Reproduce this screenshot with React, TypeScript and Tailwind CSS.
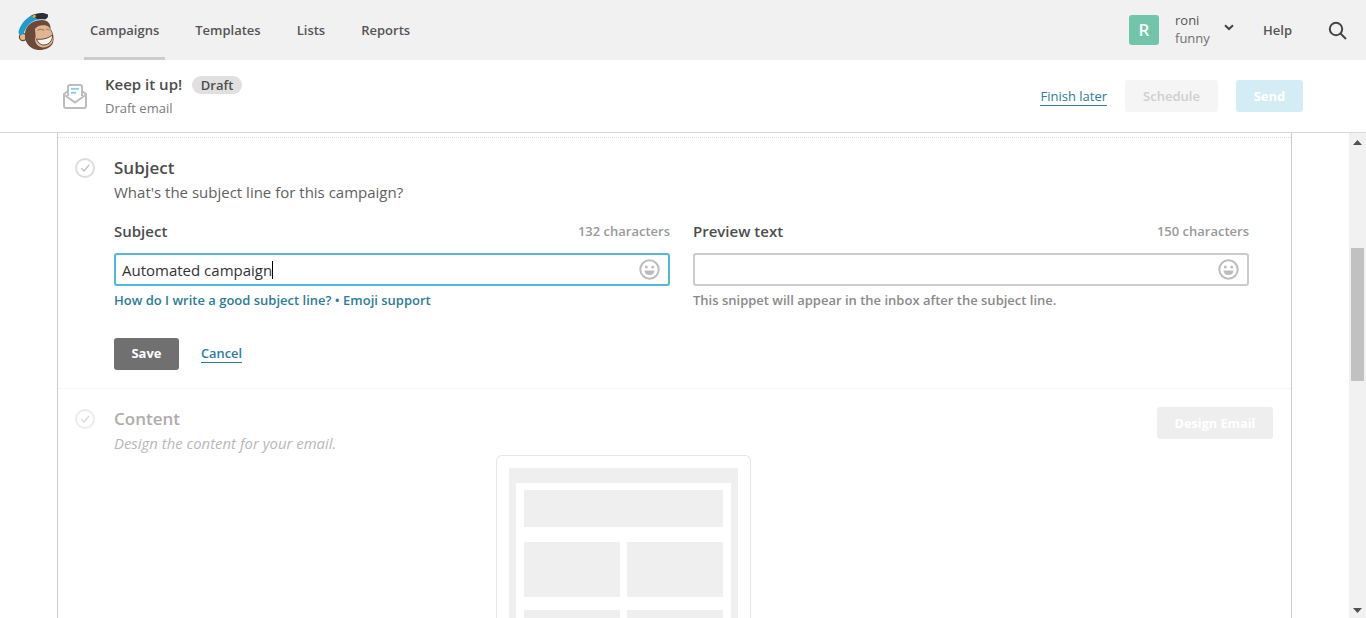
import React from "react";

function Logo() {
  return (
    <svg width="38" height="38" viewBox="0 0 38 38" className="block overflow-visible">
      <circle cx="6" cy="26" r="3.6" fill="#e3b993" stroke="#6b4a3a" strokeWidth="1.2" />
      <path d="M8 22 C9 13 17 9 25 9 C31 9 34 13 33.5 18 C36 21 37.5 27 36 32 C34 37 27 39.5 21 39 C14 38.5 9 33 8 27Z" fill="#6b4a3a" />
      <path d="M18 18 C20 14 29 13 32 16 C33.5 19 35.5 22 36 26 C37 31 33 36 27 36.5 C22 37 18 33 18 28 C19.5 25 18 22 18 18Z" fill="#dfb592" />
      <path d="M19.5 28 C25 29 31 27.5 35.5 24 C36 29 32 34 27 34 C23 34 20.5 31 19.5 28Z" fill="#f7f3ea" stroke="#4f3528" strokeWidth="0.9" />
      <path d="M20.5 19.5 Q24 17 27 19.5" fill="none" stroke="#a67a58" strokeWidth="1.2" />
      <path d="M29 18.5 Q31 17.5 32.5 19" fill="none" stroke="#a67a58" strokeWidth="1" />
      <path d="M1.5 21 C2.5 16 6 9.5 14 4.5 L21 8.5 C14 10 9 15 6.5 23 C4.5 24.5 1.5 24 1.5 21Z" fill="#1e9ccd" />
      <path d="M14 4.5 C20 1.5 27 1 31 3.5 C31.5 6 30 8 28 8.5 C26 8 23 8 21 8.5Z" fill="#2b3037" />
      <path d="M15.5 4.5 L18.5 3.5 L18.9 6 L16 7Z" fill="#dcb23c" />
    </svg>
  );
}

function EnvelopeIcon() {
  return (
    <svg width="26" height="26" viewBox="0 0 26 26" fill="none" className="block">
      <path d="M6 12 V3 Q6 1 8 1 H18 Q20 1 20 3 V12" stroke="#bdbdbd" strokeWidth="2" />
      <path d="M6 7 L2 10 V22 Q2 24 4 24 H22 Q24 24 24 22 V10 L20 7" stroke="#bdbdbd" strokeWidth="2" strokeLinejoin="round" />
      <path d="M2.5 11 L13 18.5 L23.5 11" stroke="#bdbdbd" strokeWidth="2" />
      <path d="M9 4.8 H17" stroke="#87cfe9" strokeWidth="1.8" />
      <path d="M9 8.8 H14" stroke="#87cfe9" strokeWidth="1.8" />
    </svg>
  );
}

function CheckCircle({ faded }: { faded?: boolean }) {
  const c = faded ? "#ececec" : "#dcdcdc";
  const k = faded ? "#d8d8d8" : "#bfbfbf";
  return (
    <svg width="20" height="20" viewBox="0 0 20 20" fill="none" className="block">
      <circle cx="10" cy="10" r="9" stroke={c} strokeWidth="2" />
      <path d="M6.2 10.2 L9 13 L14 7" stroke={k} strokeWidth="1.2" />
    </svg>
  );
}

function Smile() {
  return (
    <svg width="21" height="21" viewBox="0 0 21 21" fill="none" className="block">
      <circle cx="10.5" cy="10.5" r="9.2" stroke="#bdbdbd" strokeWidth="2" />
      <circle cx="7.3" cy="8" r="1.5" fill="#bdbdbd" />
      <circle cx="13.7" cy="8" r="1.5" fill="#bdbdbd" />
      <path d="M5.5 11.5 H15.5 Q15 16 10.5 16 Q6 16 5.5 11.5Z" fill="#bdbdbd" />
    </svg>
  );
}

function Field({
  label,
  count,
  value,
  focused,
  children,
}: {
  label: string;
  count: string;
  value?: string;
  focused?: boolean;
  children: React.ReactNode;
}) {
  return (
    <div className="w-[556px]">
      <div className="flex items-center justify-between h-[20px] pt-[1px]">
        <span className="text-[15px] font-semibold text-[#4d4d4d]">{label}</span>
        <span className="text-[13px] font-semibold text-[#999999]">{count}</span>
      </div>
      <div
        className={
          focused
            ? "mt-[12px] h-[33px] border-2 border-[#52b8d3] rounded-[3px] flex items-center justify-between pl-[6px] pr-[8px]"
            : "mt-[12px] h-[33px] border-2 border-[#cccccc] rounded-[3px] flex items-center justify-between pl-[6px] pr-[8px]"
        }
      >
        <span className="flex items-center pt-[1px] text-[15px] text-[#333333]">
          {value}
          {focused && <span className="inline-block w-px h-[18px] bg-black" />}
        </span>
        <Smile />
      </div>
      <div className="mt-[5px] h-[20px] text-[13px] font-semibold flex items-center">{children}</div>
    </div>
  );
}

export default function App() {
  return (
    <div className="h-[618px] w-[1366px] overflow-hidden flex flex-col bg-white font-['Open_Sans',sans-serif] text-[#4d4d4d]">
      <header className="h-[60px] shrink-0 bg-[#f1f1f1] flex items-center">
        <div className="ml-[17px] w-[38px]">
          <Logo />
        </div>
        <nav className="ml-[29px] flex h-full gap-[24px] text-[13px] font-semibold text-[#555555]">
          <a className="px-[6px] h-full flex items-center border-b-[3px] border-[#cccccc] pt-[4px]">Campaigns</a>
          <a className="px-[6px] h-full flex items-center pt-[1px]">Templates</a>
          <a className="px-[6px] h-full flex items-center pt-[1px]">Lists</a>
          <a className="px-[6px] h-full flex items-center pt-[1px]">Reports</a>
        </nav>
        <div className="ml-auto flex items-center h-full">
          <div className="w-[30px] h-[30px] rounded-[3px] bg-[#72c4aa] text-white font-semibold text-[17px] flex items-center justify-center">
            R
          </div>
          <div className="ml-[16px] w-[47px] -mt-[2px] text-[13px] leading-[18px] text-[#555555]">
            <div>roni</div>
            <div className="text-[#6f6f6f]">funny</div>
          </div>
          <svg width="10" height="7" viewBox="0 0 10 7" fill="none" className="ml-[2px] mb-[6px]">
            <path d="M1 1.2 L5 5 L9 1.2" stroke="#444444" strokeWidth="2" />
          </svg>
          <a className="ml-[29px] pt-[1px] text-[13px] font-semibold text-[#555555]">Help</a>
          <svg width="19" height="19" viewBox="0 0 19 19" fill="none" className="ml-[36px] mr-[19px]">
            <circle cx="8" cy="8" r="6.2" stroke="#444444" strokeWidth="2" />
            <path d="M12.5 12.5 L18 18" stroke="#444444" strokeWidth="2" />
          </svg>
        </div>
      </header>

      <div className="h-[73px] shrink-0 border-b border-[#d8d8d8] flex items-center">
        <div className="ml-[62px] mt-[2px]">
          <EnvelopeIcon />
        </div>
        <div className="ml-[17px] -mt-[2px]">
          <div className="flex items-center h-[22px]">
            <span className="text-[15px] font-semibold text-[#4d4d4d]">Keep it up!</span>
            <span className="ml-[10px] mt-[1px] h-[18px] w-[50px] rounded-full bg-[#e0e0e0] text-[13px] font-semibold flex items-center justify-center">
              <span className="pt-[2px]">Draft</span>
            </span>
          </div>
          <div className="mt-[3px] text-[13px] leading-[18px] text-[#7a7a7a]">Draft email</div>
        </div>
        <div className="ml-auto mr-[63px] flex items-center">
          <a className="text-[13px] mt-[1px] leading-[17px] text-[#2c7d97] border-b border-[#2c7d97]">Finish later</a>
          <div className="ml-[18px] w-[93px] h-[32px] pt-[1px] rounded-[3px] bg-[#f5f5f5] text-[#cfcfcf] text-[13px] font-semibold flex items-center justify-center">
            Schedule
          </div>
          <div className="ml-[18px] w-[67px] h-[32px] pt-[1px] rounded-[3px] bg-[#d4edf4] text-white text-[13px] font-bold flex items-center justify-center">
            Send
          </div>
        </div>
      </div>

      <div className="flex-1 min-h-0 flex">
        <main className="flex-1 min-w-0 overflow-hidden pl-[57px] pr-[57px]">
          <div className="w-[1235px] h-full border-x border-[#cccccc] pt-[4px]">
            <section className="border-t border-dotted border-[#dddddd] h-[252px] border-b border-b-[#eeeeee]">
              <div className="flex pt-[20px] pl-[17px]">
                <div className="w-[39px] shrink-0">
                  <CheckCircle />
                </div>
                <div>
                  <h2 className="text-[17px] leading-[20px] font-semibold text-[#4d4d4d]">Subject</h2>
                  <p className="mt-[4px] text-[15px] leading-[20px] text-[#5f5f5f]">
                    What's the subject line for this campaign?
                  </p>
                  <div className="mt-[19px] flex gap-[23px]">
                    <Field label="Subject" count="132 characters" value="Automated campaign" focused>
                      <span className="text-[#2c7d97]">How do I write a good subject line? • Emoji support</span>
                    </Field>
                    <Field label="Preview text" count="150 characters">
                      <span className="text-[#8a8a8a]">This snippet will appear in the inbox after the subject line.</span>
                    </Field>
                  </div>
                  <div className="mt-[27px] flex items-center">
                    <div className="w-[65px] h-[32px] rounded-[3px] bg-[#707070] text-white text-[13px] font-bold flex items-center justify-center">
                      Save
                    </div>
                    <a className="ml-[22px] mb-[1px] text-[12.8px] font-semibold leading-[17px] text-[#2c7d97] border-b border-[#2c7d97]">
                      Cancel
                    </a>
                  </div>
                </div>
              </div>
            </section>
            <section>
              <div className="flex pt-[20px] pl-[17px]">
                <div className="w-[39px] shrink-0">
                  <CheckCircle faded />
                </div>
                <div className="flex-1 min-w-0">
                  <div className="flex justify-between">
                    <div>
                      <h2 className="text-[17px] leading-[20px] font-semibold text-[#adadad]">Content</h2>
                      <p className="mt-[4px] text-[14.9px] leading-[20px] italic text-[#b8b8b8]">
                        Design the content for your email.
                      </p>
                    </div>
                    <div className="-mt-[2px] mr-[18px] w-[116px] h-[32px] pt-[1px] rounded-[3px] bg-[#eeeeee] text-white text-[12.7px] font-bold flex items-center justify-center">
                      Design Email
                    </div>
                  </div>
                  <div className="ml-[382px] mt-[2px] w-[255px] h-[200px] border border-b-0 border-[#e6e6e6] rounded-t-[6px] pt-[12px] px-[12px]">
                    <div className="bg-[#efefef] h-[200px] pt-[15px] px-[7px]">
                      <div className="bg-white h-[200px] pt-[7px] px-[8px]">
                        <div className="h-[37px] bg-[#efefef]" />
                        <div className="mt-[15px] grid grid-cols-2 gap-[7px]">
                          <div className="h-[55px] bg-[#efefef]" />
                          <div className="h-[55px] bg-[#efefef]" />
                          <div className="mt-[6px] h-[40px] bg-[#efefef]" />
                          <div className="mt-[6px] h-[40px] bg-[#efefef]" />
                        </div>
                      </div>
                    </div>
                  </div>
                </div>
              </div>
            </section>
          </div>
        </main>
        <aside className="relative w-[17px] shrink-0 bg-[#f1f1f1] flex justify-center">
          <div className="mt-[115px] w-[13px] h-[133px] bg-[#c1c1c1]" />
          <svg width="9" height="5" viewBox="0 0 9 5" className="absolute top-[7px] left-[4px]">
            <path d="M0 5 L4.5 0 L9 5Z" fill="#505050" />
          </svg>
          <svg width="9" height="5" viewBox="0 0 9 5" className="absolute bottom-[5px] left-[4px]">
            <path d="M0 0 L4.5 5 L9 0Z" fill="#505050" />
          </svg>
        </aside>
      </div>
    </div>
  );
}
